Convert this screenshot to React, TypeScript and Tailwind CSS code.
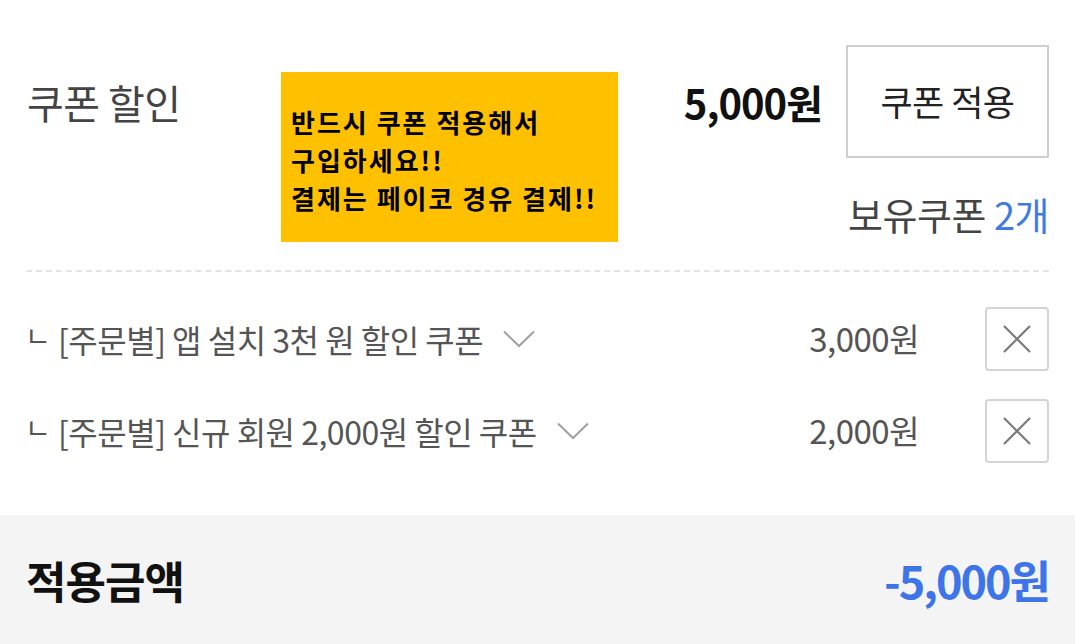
const font = { fontFamily: '"Noto Sans CJK KR", "Noto Sans", sans-serif' };

function Chevron() {
  return (
    <svg width="32" height="18" viewBox="0 0 32 18" fill="none" className="ml-5 shrink-0">
      <path d="M1 1.5 L16 16 L31 1.5" stroke="#a0a0a0" strokeWidth="2" />
    </svg>
  );
}

function RemoveButton() {
  return (
    <button className="w-[64px] h-[64px] border-2 border-[#d4d4d4] rounded-[4px] flex items-center justify-center bg-white">
      <svg width="30" height="30" viewBox="0 0 30 30" fill="none">
        <path d="M2 2 L28 28 M28 2 L2 28" stroke="#7a7a7a" strokeWidth="2.2" />
      </svg>
    </button>
  );
}

interface CouponRowProps {
  name: string;
  amount: string;
}

function CouponRow({ name, amount }: CouponRowProps) {
  return (
    <div className="flex items-center h-[92px]">
      <span className="text-[28px] text-[#555] w-[33px] -mt-[8px] -ml-[1px]">ㄴ</span>
      <span className="text-[32px] text-[#555] tracking-[-0.5px]">{name}</span>
      <Chevron />
      <span className="ml-auto text-[33px] text-[#555] tracking-[-0.5px]">{amount}</span>
      <div className="ml-[66px]">
        <RemoveButton />
      </div>
    </div>
  );
}

export default function App() {
  return (
    <div className="w-[1075px] h-[644px] bg-white overflow-hidden" style={font}>
      <div className="relative px-[26px] pt-[45px]">
        <div className="flex items-center justify-between">
          <h2 className="text-[40px] text-[#444] ml-[1px] tracking-[-0.5px]">쿠폰 할인</h2>
          <div className="flex items-center">
            <span className="text-[40px] font-bold text-[#111] tracking-[-1px]">5,000원</span>
            <button className="ml-[24px] w-[203px] h-[113px] border-2 border-[#cfcfcf] bg-white text-[35px] text-[#222] tracking-[-0.5px]">
              쿠폰 적용
            </button>
          </div>
        </div>
        <div className="flex justify-end mt-[28px] text-[38px] text-[#444] tracking-[-0.5px] leading-[56px]">
          보유쿠폰&nbsp;<span className="text-[#3f7be0]">2개</span>
        </div>

        <div className="absolute left-[281px] top-[72px] w-[337px] h-[170px] bg-[#ffc000] flex flex-col justify-center px-[10px] pt-[6px] text-[26px] font-bold text-black leading-[38px] tracking-[2px] whitespace-nowrap">
          <p>반드시 쿠폰 적용해서</p>
          <p>구입하세요!!</p>
          <p>결제는 페이코 경유 결제!!</p>
        </div>

        <div className="mt-[28px] border-t-2 border-dashed border-[#e3e3e3]" />

        <div className="pt-[21px]">
          <CouponRow name="[주문별] 앱 설치 3천 원 할인 쿠폰" amount="3,000원" />
          <CouponRow name="[주문별] 신규 회원 2,000원 할인 쿠폰" amount="2,000원" />
        </div>
      </div>

      <div className="mt-[38px] h-[140px] bg-[#f4f4f4] px-[26px] flex items-center justify-between pb-[10px]">
        <span className="text-[44px] font-bold text-[#111] tracking-[-1px]">적용금액</span>
        <span className="text-[45px] font-bold text-[#3d74e8] tracking-[-2px]">-5,000원</span>
      </div>
    </div>
  );
}
